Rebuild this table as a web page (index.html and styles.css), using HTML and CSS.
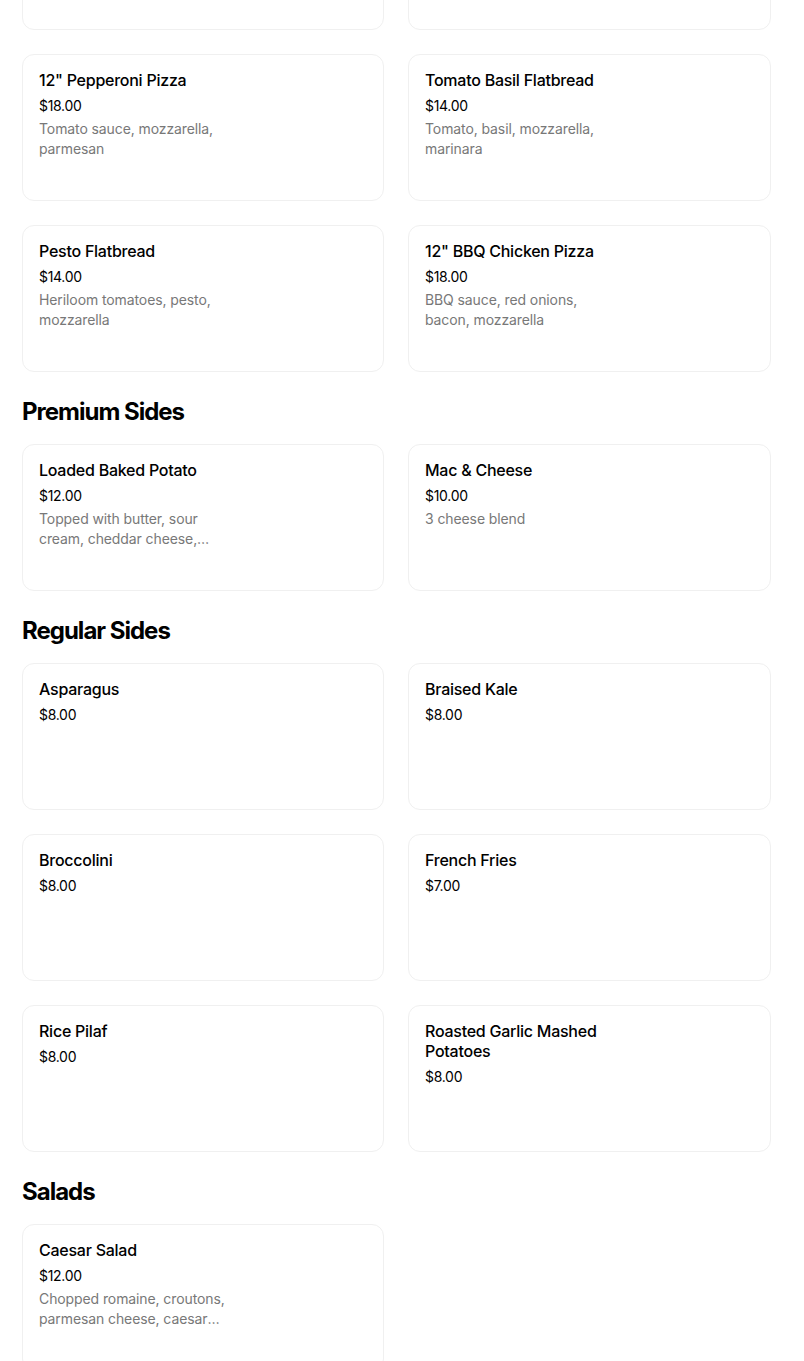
FILE: index.html
```html
<!DOCTYPE html>
<html lang="en">
<head>
<meta charset="utf-8">
<title>Menu</title>
<link rel="stylesheet" href="styles.css">
</head>
<body>
<main class="menu">
  <section class="section">
    <div class="grid">
      <article class="card" aria-hidden="true"></article>
      <article class="card" aria-hidden="true"></article>
      <article class="card"><div class="info"><h3 class="name">12" Pepperoni Pizza</h3><p class="price">$18.00</p><p class="desc">Tomato sauce, mozzarella, parmesan</p></div></article>
      <article class="card"><div class="info"><h3 class="name">Tomato Basil Flatbread</h3><p class="price">$14.00</p><p class="desc">Tomato, basil, mozzarella, marinara</p></div></article>
      <article class="card"><div class="info"><h3 class="name">Pesto Flatbread</h3><p class="price">$14.00</p><p class="desc">Heriloom tomatoes, pesto, mozzarella</p></div></article>
      <article class="card"><div class="info"><h3 class="name">12" BBQ Chicken Pizza</h3><p class="price">$18.00</p><p class="desc">BBQ sauce, red onions, bacon, mozzarella</p></div></article>
    </div>
  </section>

  <section class="section">
    <h2 class="section-title">Premium Sides</h2>
    <div class="grid">
      <article class="card"><div class="info"><h3 class="name">Loaded Baked Potato</h3><p class="price">$12.00</p><p class="desc">Topped with butter, sour cream, cheddar cheese, bacon, chives</p></div></article>
      <article class="card"><div class="info"><h3 class="name">Mac &amp; Cheese</h3><p class="price">$10.00</p><p class="desc">3 cheese blend</p></div></article>
    </div>
  </section>

  <section class="section">
    <h2 class="section-title">Regular Sides</h2>
    <div class="grid">
      <article class="card"><div class="info"><h3 class="name">Asparagus</h3><p class="price">$8.00</p></div></article>
      <article class="card"><div class="info"><h3 class="name">Braised Kale</h3><p class="price">$8.00</p></div></article>
      <article class="card"><div class="info"><h3 class="name">Broccolini</h3><p class="price">$8.00</p></div></article>
      <article class="card"><div class="info"><h3 class="name">French Fries</h3><p class="price">$7.00</p></div></article>
      <article class="card"><div class="info"><h3 class="name">Rice Pilaf</h3><p class="price">$8.00</p></div></article>
      <article class="card"><div class="info"><h3 class="name">Roasted Garlic Mashed Potatoes</h3><p class="price">$8.00</p></div></article>
    </div>
  </section>

  <section class="section">
    <h2 class="section-title">Salads</h2>
    <div class="grid">
      <article class="card"><div class="info"><h3 class="name">Caesar Salad</h3><p class="price">$12.00</p><p class="desc">Chopped romaine, croutons, parmesan cheese, caesar dressing</p></div></article>
    </div>
  </section>
</main>
</body>
</html>
```

FILE: styles.css
```css
* { box-sizing: border-box; }

html, body {
  margin: 0;
  padding: 0;
  background: #ffffff;
  overflow: hidden;
}

body {
  font-family: Inter, "Noto Sans", "Liberation Sans", sans-serif;
  color: #000000;
}

.menu {
  width: 749px;
  margin-left: 22px;
  margin-top: -117px;
  display: flex;
  flex-direction: column;
  gap: 24px;
}

.section {
  display: flex;
  flex-direction: column;
}

.section-title {
  margin: 0 0 16px 0;
  font-size: 24px;
  line-height: 32px;
  font-weight: 700;
  letter-spacing: -1px;
  color: #000000;
}

.grid {
  display: grid;
  grid-template-columns: 362px 1fr;
  column-gap: 24px;
  row-gap: 24px;
}

.card {
  height: 147px;
  border: 1px solid #f0f0f0;
  border-radius: 12px;
  padding: 15px 16px 16px 16px;
  display: flex;
  background: #ffffff;
}

.info {
  width: 190px;
  display: flex;
  flex-direction: column;
}

.name {
  margin: 0;
  font-size: 16px;
  line-height: 20px;
  font-weight: 500;
  letter-spacing: -0.25px;
  color: #000000;
}

.price {
  margin: 6px 0 0 0;
  font-size: 14px;
  line-height: 20px;
  font-weight: 400;
  color: #000000;
  letter-spacing: -0.3px;
}

.desc {
  margin: 3px 0 0 0;
  font-size: 14px;
  line-height: 20px;
  color: #787878;
  letter-spacing: -0.1px;
  display: -webkit-box;
  -webkit-line-clamp: 2;
  -webkit-box-orient: vertical;
  overflow: hidden;
}
```
